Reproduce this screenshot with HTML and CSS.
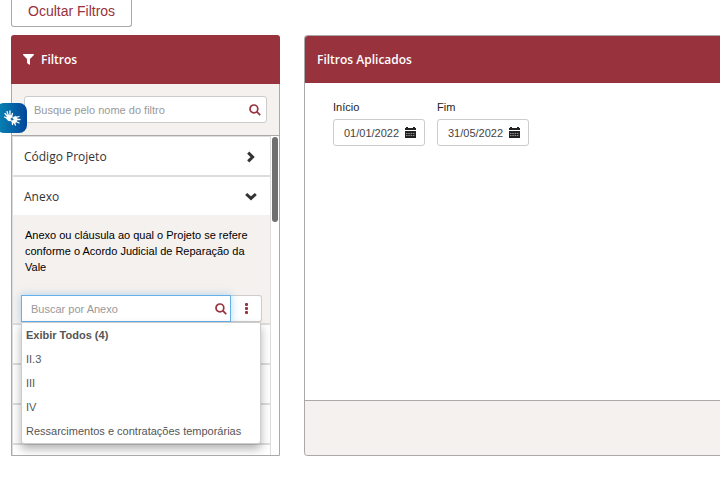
FILE: index.html
```html
<!DOCTYPE html>
<html lang="pt-BR">
<head>
<meta charset="utf-8">
<meta name="viewport" content="width=device-width, initial-scale=1">
<title>Filtros</title>
<link rel="stylesheet" href="styles.css">
</head>
<body>
<button class="toggle" type="button">Ocultar Filtros</button>
<div class="layout">
  <aside class="panel sidebar">
    <h2 class="panel-title">
      <svg class="funnel" viewBox="0 0 11 11" aria-hidden="true"><path d="M0.3 0H10.7Q11.2 .6 10.7 1.2L7 5V10.3Q6.8 11 6 10.6L4.3 9.2Q4 8.9 4 8.5V5L.3 1.2Q-.2 .6 .3 0Z"/></svg>
      Filtros
    </h2>
    <div class="finder">
      <label class="field">
        <input type="text" placeholder="Busque pelo nome do filtro" aria-label="Busque pelo nome do filtro">
        <svg class="search" viewBox="0 0 12 12" aria-hidden="true"><circle cx="4.9" cy="4.9" r="3.9"/><path d="M7.7 7.7L11.2 11.2"/></svg>
      </label>
    </div>
    <div class="scroller">
      <div class="list">
        <button class="item" type="button">Código Projeto
          <svg class="chevron" viewBox="0 0 12 12" aria-hidden="true"><path d="M3.2 1.6L7.6 6L3.2 10.4"/></svg>
        </button>
        <button class="item open" type="button" aria-expanded="true">Anexo
          <svg class="chevron" viewBox="0 0 12 12" aria-hidden="true"><path d="M1.2 3L6 7.4L10.8 3"/></svg>
        </button>
        <div class="details">
          <p>Anexo ou cláusula ao qual o Projeto se refere conforme o Acordo Judicial de Reparação da Vale</p>
          <div class="combo">
            <label class="field focused">
              <input type="text" placeholder="Buscar por Anexo" aria-label="Buscar por Anexo">
              <svg class="search" viewBox="0 0 12 12" aria-hidden="true"><circle cx="4.9" cy="4.9" r="3.9"/><path d="M7.7 7.7L11.2 11.2"/></svg>
            </label>
            <button class="more" type="button" aria-label="Mais">
              <svg viewBox="0 0 3 11" aria-hidden="true"><rect width="3" height="3" rx="1"/><rect y="4" width="3" height="3" rx="1"/><rect y="8" width="3" height="3" rx="1"/></svg>
            </button>
            <ul class="menu">
              <li class="all">Exibir Todos (4)</li>
              <li>II.3</li>
              <li>III</li>
              <li>IV</li>
              <li>Ressarcimentos e contratações temporárias</li>
            </ul>
          </div>
        </div>
        <div class="item"></div>
        <div class="item"></div>
        <div class="item"></div>
        <div class="item"></div>
      </div>
      <div class="track"><div class="thumb"></div></div>
    </div>
  </aside>
  <main class="panel applied">
    <h2 class="panel-title">Filtros Aplicados</h2>
    <div class="dates">
      <div class="date">
        <label for="start">Início</label>
        <div class="date-box">
          <input id="start" type="text" value="01/01/2022">
          <svg class="calendar" viewBox="0 0 11 11" aria-hidden="true"><path d="M0 1H1V0H3V1H8V0H10V1H11V3H0ZM0 4H11V11H0Z"/><path class="grid" d="M1 6.5H10M1 8.5H10"/></svg>
        </div>
      </div>
      <div class="date">
        <label for="end">Fim</label>
        <div class="date-box">
          <input id="end" type="text" value="31/05/2022">
          <svg class="calendar" viewBox="0 0 11 11" aria-hidden="true"><path d="M0 1H1V0H3V1H8V0H10V1H11V3H0ZM0 4H11V11H0Z"/><path class="grid" d="M1 6.5H10M1 8.5H10"/></svg>
        </div>
      </div>
    </div>
    <div class="footer"></div>
  </main>
</div>
<button class="libras" type="button" aria-label="Libras">
  <svg viewBox="0 0 18 18" aria-hidden="true"><path d="M4.500 7.500L2 4.500M5.500 7L4 2.500M7 6.500L7 2M4.500 9.500L1.500 8M8.500 7.500L9.500 4.500"/><path d="M13 8.500L16 7.500M13.500 10.500L17 10.500M13 12.500L16 14M11 13L12.500 16M9.500 13L9.500 15.500"/><path class="palm" d="M3.500 8Q5 5.500 8.500 6.500L9.500 8L7.500 9.500L8 12Q5 12.500 4 10.500ZM9.500 8.500L13 7L14.500 10L13 13.500Q10.500 15 8.500 13L8.500 11.500L11 11Z"/></svg>
</button>
</body>
</html>
```
FILE: styles.css
```css
* { box-sizing: border-box; }

body {
  margin: 0;
  background: #fff;
  color: #333;
  font: 11px/16px "Liberation Sans", Arial, sans-serif;
  overflow: hidden;
}

button, input { font: inherit; }
svg { flex: none; }

.toggle {
  display: block;
  margin-left: 11px;
  padding: 3px 16px 7px;
  border: 1px solid #aaa;
  border-top: 0;
  border-radius: 0 0 3px 3px;
  background: #fff;
  color: #98323d;
  font-size: 14px;
  line-height: 16px;
}

.layout {
  display: flex;
  gap: 24px;
  margin: 8px 0 0 11px;
}

.panel {
  display: flex;
  flex-direction: column;
  border: 1px solid #a9a9a9;
  border-radius: 4px 4px 0 0;
}

.sidebar {
  width: 269px;
  flex: none;
}

.sidebar .panel-title {
  margin: -1px -1px 0;
  padding: 0 12px;
  height: 49px;
}

.applied {
  flex: 1;
  border-right: 0;
  border-radius: 4px 0 0 4px;
}

.panel-title {
  display: flex;
  align-items: center;
  gap: 7px;
  margin: 0;
  padding: 0 12px;
  height: 47px;
  border-radius: 3px 3px 0 0;
  background: #98323d;
  color: #fff;
  font: 600 12px/16px "Open Sans", "Noto Sans", sans-serif;
}

.applied .panel-title { border-radius: 3px 0 0; }

.funnel {
  width: 11px;
  height: 11px;
  fill: #fff;
}

.finder {
  padding: 12px;
  border-bottom: 1px solid #a9a9a9;
  background: #f5f1ee;
}

.field {
  display: flex;
  align-items: center;
  flex: 1;
  height: 27px;
  padding: 0 5px 0 9px;
  border: 1px solid #ccc;
  border-radius: 3px;
  background: #fff;
}

.field input {
  flex: 1;
  min-width: 0;
  padding: 0;
  border: 0;
  outline: 0;
  background: none;
}

.field input::placeholder { color: #999; }

.search {
  width: 12px;
  height: 12px;
  fill: none;
  stroke: #98323d;
  stroke-width: 1.7;
}

.scroller {
  display: flex;
  height: 319px;
  overflow: hidden;
}

.list {
  flex: 1;
  border: 1px solid #ddd;
}

.item {
  display: flex;
  align-items: center;
  justify-content: space-between;
  width: 100%;
  height: 40px;
  padding: 1px 13px 0 11px;
  border: 0;
  border-bottom: 2px solid #ddd;
  background: #fff;
  color: #333;
  font: 500 12px/17px "Open Sans", "Noto Sans", sans-serif;
}

.item.open {
  height: 38px;
  border-bottom: 0;
}

.chevron {
  width: 12px;
  height: 12px;
  fill: none;
  stroke: #333;
  stroke-width: 3;
}

.details {
  padding: 12px 8px 1px;
  border-bottom: 2px solid #ddd;
  background: #f5f1ee;
}

.details p {
  margin: 0 0 20px;
  padding: 0 4px;
  color: #000;
}

.combo {
  position: relative;
  display: flex;
}

.focused {
  border-color: #66afe9;
  border-radius: 0;
  box-shadow: 0 0 8px rgba(102, 175, 233, 0.5);
  padding-right: 3px;
  z-index: 1;
}

.more {
  display: flex;
  align-items: center;
  justify-content: center;
  width: 31px;
  padding: 0;
  border: 1px solid #ccc;
  border-left: 0;
  border-radius: 0 3px 3px 0;
  background: #fff;
}

.more svg {
  width: 3px;
  height: 11px;
  fill: #98323d;
}

.menu {
  position: absolute;
  top: 100%;
  left: 0;
  right: 1px;
  z-index: 2;
  margin: 0;
  padding: 0;
  border: 1px solid #ccc;
  border-radius: 0 0 3px 3px;
  background: #fff;
  box-shadow: 0 5px 10px rgba(0, 0, 0, 0.3);
  color: #555;
  list-style: none;
}

.menu li {
  padding: 4px;
  white-space: nowrap;
}

.menu .all { font-weight: bold; }

.track {
  width: 8px;
  padding: 1px;
  background: #fff;
}

.thumb {
  height: 85px;
  border-radius: 3px;
  background: #707070;
}

.dates {
  display: flex;
  flex: 1;
  gap: 12px;
  padding: 16px 28px;
}

.date label {
  display: block;
  margin-bottom: 4px;
  color: #222;
}

.date-box {
  display: flex;
  align-items: center;
  width: 92px;
  height: 27px;
  padding: 0 8px 0 10px;
  border: 1px solid #ccc;
  border-radius: 3px;
}

.date-box input {
  flex: 1;
  min-width: 0;
  padding: 0;
  border: 0;
  background: none;
  color: #444;
}

.calendar {
  width: 11px;
  height: 11px;
  fill: #222;
}

.calendar .grid {
  fill: none;
  stroke: #aaa;
  stroke-width: 0.8;
  stroke-dasharray: 1.5 0.8;
}

.footer {
  height: 55px;
  border-top: 1px solid #a9a9a9;
  border-radius: 0 0 0 3px;
  background: #f5f1ee;
}

.libras {
  position: absolute;
  top: 103px;
  left: -4px;
  z-index: 3;
  display: flex;
  align-items: center;
  justify-content: center;
  width: 31px;
  height: 30px;
  padding: 0;
  border: 0;
  border-radius: 8px;
  background: linear-gradient(90deg, #0787b5, #04459a);
}

.libras svg {
  width: 18px;
  height: 18px;
  fill: none;
  stroke: #fff;
  stroke-width: 1.3;
  stroke-linecap: round;
}

.libras .palm {
  fill: #fff;
  stroke-width: 0.4;
}
```
